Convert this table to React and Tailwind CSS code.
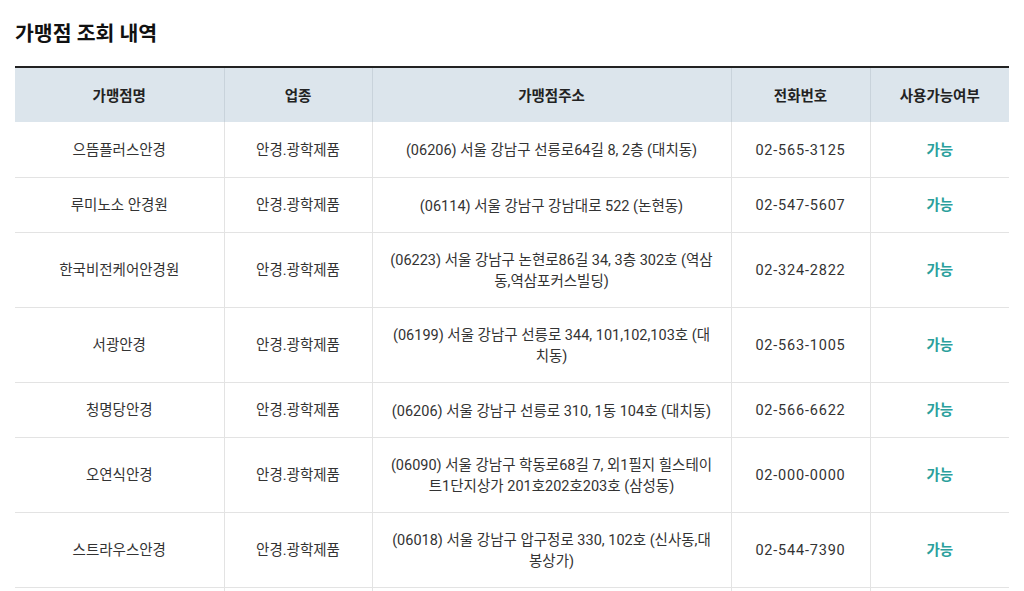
import React from "react";

const rows = [
  ["으뜸플러스안경", "안경.광학제품", ["(06206) 서울 강남구 선릉로64길 8, 2층 (대치동)"], "02-565-3125"],
  ["루미노소 안경원", "안경.광학제품", ["(06114) 서울 강남구 강남대로 522 (논현동)"], "02-547-5607"],
  ["한국비전케어안경원", "안경.광학제품", ["(06223) 서울 강남구 논현로86길 34, 3층 302호 (역삼", "동,역삼포커스빌딩)"], "02-324-2822"],
  ["서광안경", "안경.광학제품", ["(06199) 서울 강남구 선릉로 344, 101,102,103호 (대", "치동)"], "02-563-1005"],
  ["청명당안경", "안경.광학제품", ["(06206) 서울 강남구 선릉로 310, 1동 104호 (대치동)"], "02-566-6622"],
  ["오연식안경", "안경.광학제품", ["(06090) 서울 강남구 학동로68길 7, 외1필지 힐스테이", "트1단지상가 201호202호203호 (삼성동)"], "02-000-0000"],
  ["스트라우스안경", "안경.광학제품", ["(06018) 서울 강남구 압구정로 330, 102호 (신사동,대", "봉상가)"], "02-544-7390"],
  ["", "", [""], ""],
];

export default function App() {
  return (
    <div
      className="bg-white w-[1024px] h-[591px] overflow-hidden px-[15px] pt-[19px] text-[#333]"
      style={{ fontFamily: 'Roboto, "Noto Sans CJK KR", sans-serif' }}
    >
      <h2 className="text-[20.5px] font-bold leading-[30px] text-[#111] mb-[17px]">가맹점 조회 내역</h2>
      <table className="w-[994px] table-fixed border-collapse border-t-2 border-[#222] text-[14.5px]">
        <colgroup>
          <col className="w-[209px]" />
          <col className="w-[148px]" />
          <col className="w-[359px]" />
          <col className="w-[139px]" />
          <col className="w-[139px]" />
        </colgroup>
        <thead>
          <tr className="bg-[#dce5ec] h-[55px]">
            {["가맹점명", "업종", "가맹점주소", "전화번호", "사용가능여부"].map((h, i) => (
              <th
                key={h}
                className={`font-bold text-[#222] text-center p-0 pt-[3px] ${i > 0 ? "border-l border-[#c9d3db]" : ""}`}
              >
                {h}
              </th>
            ))}
          </tr>
        </thead>
        <tbody>
          {rows.map((r, idx) => (
            <tr
              key={idx}
              className={`border-b border-[#e3e3e3] ${r[2].length > 1 ? "h-[75px]" : "h-[55px]"}`}
            >
              <td className="text-center p-0 pt-[3px] leading-[20px]">{r[0]}</td>
              <td className="text-center p-0 pt-[3px] leading-[20px] border-l border-[#e3e3e3]">{r[1]}</td>
              <td className="text-center p-0 pt-[3px] leading-[21px] whitespace-nowrap border-l border-[#e3e3e3]">
                {r[2].map((line, j) => (
                  <React.Fragment key={j}>
                    {j > 0 && <br />}
                    {line}
                  </React.Fragment>
                ))}
              </td>
              <td className="text-center p-0 pt-[3px] leading-[20px] tracking-[0.8px] border-l border-[#e3e3e3]">{r[3]}</td>
              <td className="text-center p-0 pt-[3px] leading-[20px] border-l border-[#e3e3e3] text-[#2b9f9c] font-semibold">
                {r[0] ? "가능" : ""}
              </td>
            </tr>
          ))}
        </tbody>
      </table>
    </div>
  );
}
